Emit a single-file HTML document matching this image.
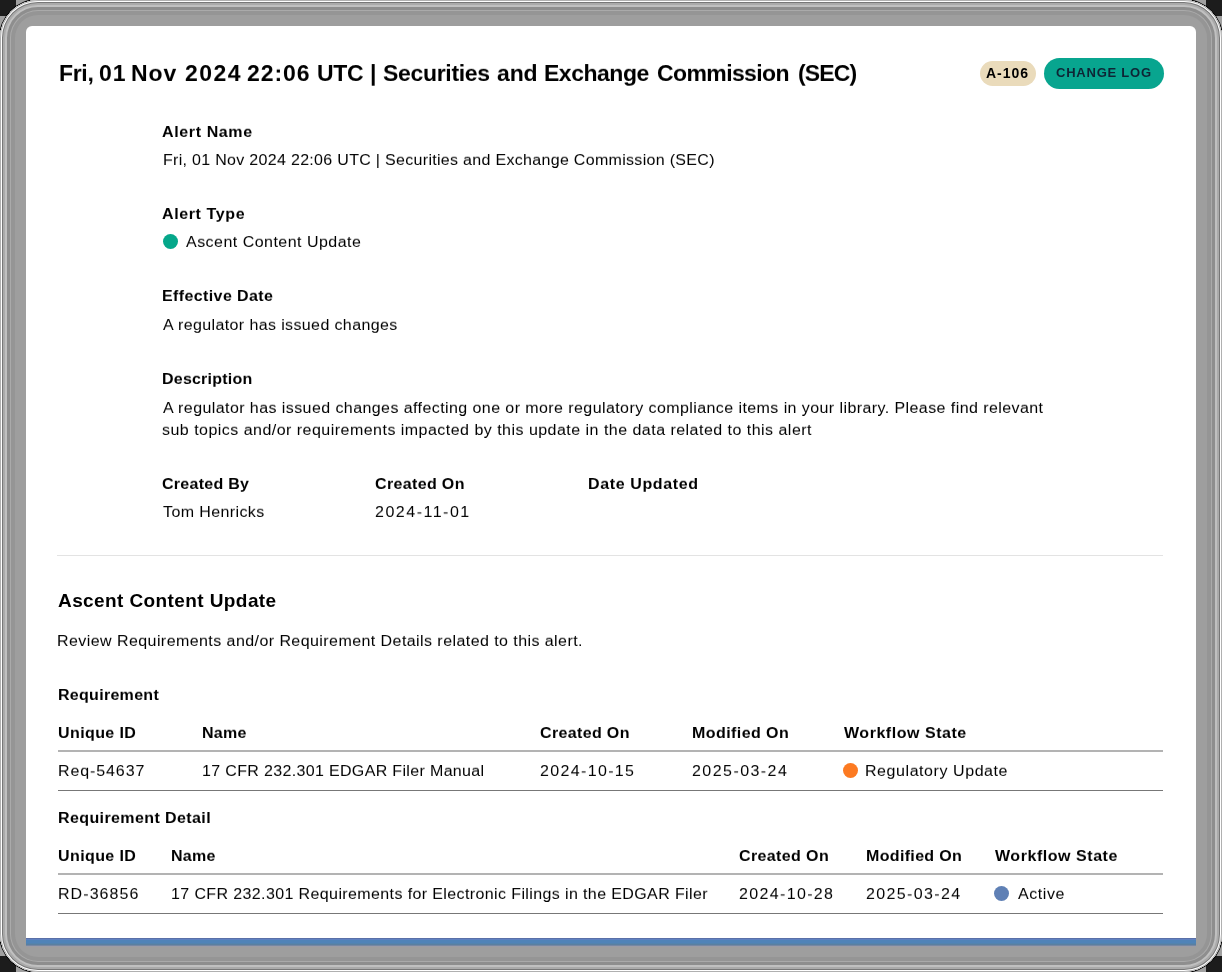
<!DOCTYPE html>
<html><head><meta charset="utf-8">
<style>
html,body{margin:0;padding:0;}
body{width:1222px;height:972px;background:#a0a0a0;position:relative;overflow:hidden;font-family:"Liberation Sans",sans-serif;color:#000;}
.cn{position:absolute;width:16px;height:16px;background:#1c1c1c;}
.frame{position:absolute;left:0;top:0;width:1222px;height:972px;border-radius:38px;background:#9e9e9e;
box-shadow:0 0 0 1px #000, inset 0 0 0 1px #b0b0b0, inset 0 0 0 2px #fff, inset 0 0 0 3px #777, inset 0 0 0 5px #aaa, inset 0 0 0 7px #c0c0c0, inset 0 0 0 10px #8e8e8e, inset 0 0 0 11px #aaa, inset 0 0 0 15px #959595;}
.modal{position:absolute;left:26px;top:26px;width:1170px;height:912px;background:#fff;border-radius:6px 6px 0 0;}
.bar{position:absolute;left:26px;top:938px;width:1170px;height:9px;background:linear-gradient(#5a70a8 0,#5a70a8 1px,#5f80c0 1px,#5f80c0 2px,#4f83b8 2px,#4f83b8 5px,#5283ae 5px,#5283ae 6px,#5a7fa0 6px,#5a7fa0 7px,#7588a4 7px,#7588a4 8px,#9c9ca6 8px);}
.t{position:absolute;white-space:nowrap;line-height:1;-webkit-font-smoothing:antialiased;will-change:transform;}
.b{font-weight:bold;}
.dot{position:absolute;width:15px;height:15px;border-radius:50%;}
.pill{position:absolute;border-radius:16px;}
.hl{position:absolute;left:58px;width:1105px;}
</style></head>
<body>
<div class="cn" style="left:0;top:0"></div><div class="cn" style="right:0;top:0"></div><div class="cn" style="left:0;bottom:0"></div><div class="cn" style="right:0;bottom:0"></div>
<div class="frame"></div>
<div class="modal"></div>
<div class="bar"></div>
<div class="pill" style="left:980px;top:61px;width:56px;height:25px;background:#eadbbb;"></div>
<div class="pill" style="left:1044px;top:58px;width:120px;height:31px;background:#08a58f;"></div>
<div class="dot" style="left:163px;top:234px;background:#05a78a;"></div>
<div class="hl" style="left:57px;width:1106px;top:555px;height:1px;background:#e3e3e3;"></div>
<div class="hl" style="top:750px;height:2px;background:#b3b3b3;"></div>
<div class="dot" style="left:843px;top:763px;background:#fc7a22;"></div>
<div class="hl" style="top:790px;height:1px;background:#777;"></div>
<div class="hl" style="top:873px;height:2px;background:#b3b3b3;"></div>
<div class="dot" style="left:994px;top:886px;background:#5f80b5;"></div>
<div class="hl" style="top:913px;height:1px;background:#777;"></div>
<div class="t b" style="left:58.54px;top:62px;font-size:23px;transform:scaleY(0.94);transform-origin:0 19px;letter-spacing:-0.33px;">Fri,</div>
<div class="t b" style="left:99.23px;top:62px;font-size:23px;transform:scaleY(0.94);transform-origin:0 19px;letter-spacing:1.0px;">01</div>
<div class="t b" style="left:131.23px;top:62px;font-size:23px;transform:scaleY(0.94);transform-origin:0 19px;letter-spacing:0.96px;">Nov</div>
<div class="t b" style="left:184.54px;top:62px;font-size:23px;transform:scaleY(0.94);transform-origin:0 19px;letter-spacing:1.437px;">2024</div>
<div class="t b" style="left:247.23px;top:62px;font-size:23px;transform:scaleY(0.94);transform-origin:0 19px;letter-spacing:0.942px;">22:06</div>
<div class="t b" style="left:317.0px;top:62px;font-size:23px;transform:scaleY(0.94);transform-origin:0 19px;letter-spacing:-0.34px;">UTC</div>
<div class="t b" style="left:369.62px;top:62px;font-size:23px;transform:scaleY(0.94);transform-origin:0 19px;">|</div>
<div class="t b" style="left:383.23px;top:62px;font-size:23px;transform:scaleY(0.94);transform-origin:0 19px;letter-spacing:-0.317px;">Securities</div>
<div class="t b" style="left:497.38px;top:62px;font-size:23px;transform:scaleY(0.94);transform-origin:0 19px;letter-spacing:-0.12px;">and</div>
<div class="t b" style="left:544.38px;top:62px;font-size:23px;transform:scaleY(0.94);transform-origin:0 19px;letter-spacing:-0.483px;">Exchange</div>
<div class="t b" style="left:657.15px;top:62px;font-size:23px;transform:scaleY(0.94);transform-origin:0 19px;letter-spacing:-0.607px;">Commission</div>
<div class="t b" style="left:797.69px;top:62px;font-size:23px;transform:scaleY(0.94);transform-origin:0 19px;letter-spacing:-0.865px;">(SEC)</div>
<div class="t b" style="left:986.0px;top:66px;font-size:14px;letter-spacing:1.0px;">A-106</div>
<div class="t b" style="left:1055.76px;top:66px;font-size:13px;letter-spacing:0.771px;color:#0e2535;">CHANGE LOG</div>
<div class="t b" style="left:162.37px;top:124px;font-size:16px;transform:scaleY(0.92);transform-origin:0 13px;letter-spacing:0.626px;">Alert Name</div>
<div class="t" style="left:162.77px;top:152px;font-size:16px;transform:scaleY(0.92);transform-origin:0 13px;letter-spacing:0.307px;">Fri, 01 Nov 2024 22:06 UTC | Securities and Exchange Commission (SEC)</div>
<div class="t b" style="left:162.45px;top:206px;font-size:16px;transform:scaleY(0.92);transform-origin:0 13px;letter-spacing:0.609px;">Alert Type</div>
<div class="t" style="left:186.38px;top:234px;font-size:16px;transform:scaleY(0.92);transform-origin:0 13px;letter-spacing:0.469px;">Ascent Content Update</div>
<div class="t b" style="left:162.15px;top:288px;font-size:16px;transform:scaleY(0.92);transform-origin:0 13px;letter-spacing:0.385px;">Effective Date</div>
<div class="t" style="left:163.0px;top:317px;font-size:16px;transform:scaleY(0.92);transform-origin:0 13px;letter-spacing:0.379px;">A regulator has issued changes</div>
<div class="t b" style="left:162.15px;top:371px;font-size:16px;transform:scaleY(0.92);transform-origin:0 13px;letter-spacing:0.215px;">Description</div>
<div class="t" style="left:163.0px;top:400px;font-size:16px;transform:scaleY(0.92);transform-origin:0 13px;letter-spacing:0.419px;">A regulator has issued changes affecting one or more regulatory compliance items in your library. Please find relevant</div>
<div class="t" style="left:162.15px;top:422px;font-size:16px;transform:scaleY(0.92);transform-origin:0 13px;letter-spacing:0.473px;">sub topics and/or requirements impacted by this update in the data related to this alert</div>
<div class="t b" style="left:162.15px;top:476px;font-size:16px;transform:scaleY(0.92);transform-origin:0 13px;letter-spacing:0.273px;">Created By</div>
<div class="t b" style="left:374.77px;top:476px;font-size:16px;transform:scaleY(0.92);transform-origin:0 13px;letter-spacing:0.351px;">Created On</div>
<div class="t b" style="left:587.77px;top:476px;font-size:16px;transform:scaleY(0.92);transform-origin:0 13px;letter-spacing:0.623px;">Date Updated</div>
<div class="t" style="left:163.15px;top:504px;font-size:16px;transform:scaleY(0.92);transform-origin:0 13px;letter-spacing:0.393px;">Tom Henricks</div>
<div class="t" style="left:374.77px;top:504px;font-size:16px;transform:scaleY(0.92);transform-origin:0 13px;letter-spacing:1.513px;">2024-11-01</div>
<div class="t b" style="left:57.69px;top:591px;font-size:19px;letter-spacing:0.404px;">Ascent Content Update</div>
<div class="t" style="left:57.15px;top:633px;font-size:16px;transform:scaleY(0.92);transform-origin:0 13px;letter-spacing:0.43px;">Review Requirements and/or Requirement Details related to this alert.</div>
<div class="t b" style="left:58.46px;top:687px;font-size:16px;transform:scaleY(0.92);transform-origin:0 13px;letter-spacing:0.293px;">Requirement</div>
<div class="t b" style="left:58.15px;top:725px;font-size:16px;transform:scaleY(0.92);transform-origin:0 13px;letter-spacing:0.404px;">Unique ID</div>
<div class="t b" style="left:202.23px;top:725px;font-size:16px;transform:scaleY(0.92);transform-origin:0 13px;letter-spacing:0.257px;">Name</div>
<div class="t b" style="left:540.38px;top:725px;font-size:16px;transform:scaleY(0.92);transform-origin:0 13px;letter-spacing:0.351px;">Created On</div>
<div class="t b" style="left:691.54px;top:725px;font-size:16px;transform:scaleY(0.92);transform-origin:0 13px;letter-spacing:0.424px;">Modified On</div>
<div class="t b" style="left:844.23px;top:725px;font-size:16px;transform:scaleY(0.92);transform-origin:0 13px;letter-spacing:0.533px;">Workflow State</div>
<div class="t" style="left:58.0px;top:763px;font-size:16px;transform:scaleY(0.92);transform-origin:0 13px;letter-spacing:0.895px;">Req-54637</div>
<div class="t" style="left:202.23px;top:763px;font-size:16px;transform:scaleY(0.92);transform-origin:0 13px;letter-spacing:0.341px;">17 CFR 232.301 EDGAR Filer Manual</div>
<div class="t" style="left:540.38px;top:763px;font-size:16px;transform:scaleY(0.92);transform-origin:0 13px;letter-spacing:1.35px;">2024-10-15</div>
<div class="t" style="left:691.54px;top:763px;font-size:16px;transform:scaleY(0.92);transform-origin:0 13px;letter-spacing:1.446px;">2025-03-24</div>
<div class="t" style="left:865.15px;top:763px;font-size:16px;transform:scaleY(0.92);transform-origin:0 13px;letter-spacing:0.567px;">Regulatory Update</div>
<div class="t b" style="left:58.46px;top:810px;font-size:16px;transform:scaleY(0.92);transform-origin:0 13px;letter-spacing:0.398px;">Requirement Detail</div>
<div class="t b" style="left:58.15px;top:848px;font-size:16px;transform:scaleY(0.92);transform-origin:0 13px;letter-spacing:0.404px;">Unique ID</div>
<div class="t b" style="left:171.0px;top:848px;font-size:16px;transform:scaleY(0.92);transform-origin:0 13px;letter-spacing:0.257px;">Name</div>
<div class="t b" style="left:739.46px;top:848px;font-size:16px;transform:scaleY(0.92);transform-origin:0 13px;letter-spacing:0.386px;">Created On</div>
<div class="t b" style="left:866.38px;top:848px;font-size:16px;transform:scaleY(0.92);transform-origin:0 13px;letter-spacing:0.339px;">Modified On</div>
<div class="t b" style="left:995.0px;top:848px;font-size:16px;transform:scaleY(0.92);transform-origin:0 13px;letter-spacing:0.545px;">Workflow State</div>
<div class="t" style="left:58.0px;top:886px;font-size:16px;transform:scaleY(0.92);transform-origin:0 13px;letter-spacing:1.066px;">RD-36856</div>
<div class="t" style="left:171.0px;top:886px;font-size:16px;transform:scaleY(0.92);transform-origin:0 13px;letter-spacing:0.384px;">17 CFR 232.301 Requirements for Electronic Filings in the EDGAR Filer</div>
<div class="t" style="left:739.46px;top:886px;font-size:16px;transform:scaleY(0.92);transform-origin:0 13px;letter-spacing:1.35px;">2024-10-28</div>
<div class="t" style="left:866.38px;top:886px;font-size:16px;transform:scaleY(0.92);transform-origin:0 13px;letter-spacing:1.36px;">2025-03-24</div>
<div class="t" style="left:1017.77px;top:886px;font-size:16px;transform:scaleY(0.92);transform-origin:0 13px;letter-spacing:0.57px;">Active</div>
</body></html>
